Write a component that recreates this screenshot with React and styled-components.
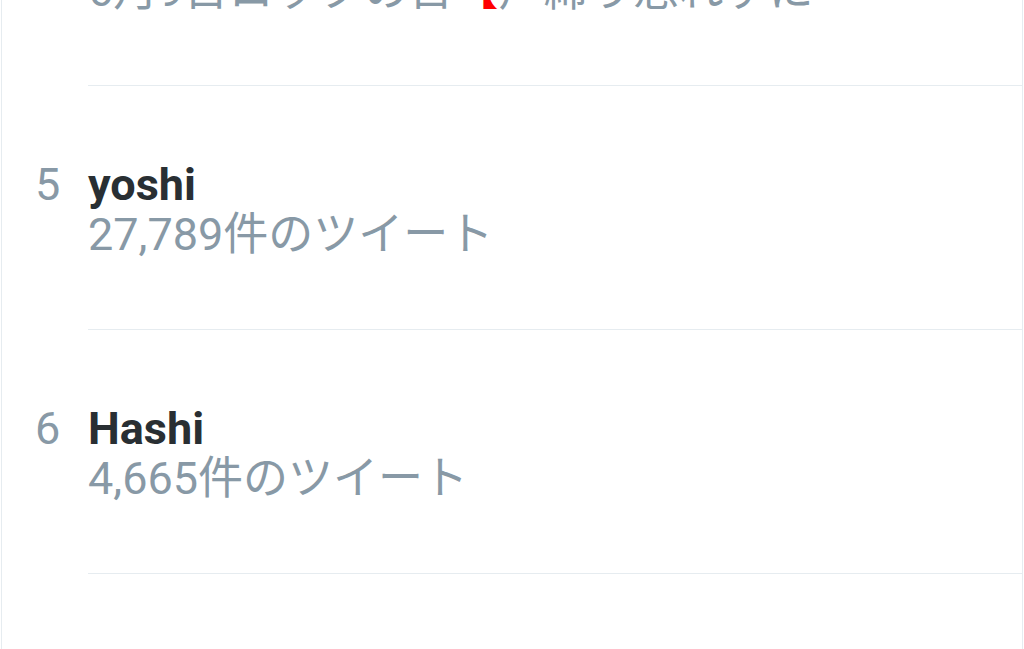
import React from "react";
import styled, { createGlobalStyle } from "styled-components";

const trends = [
  {
    rank: 4,
    name: "#ロックの日",
    detail: ["6月9日ロックの日", "【", "戸締り忘れずに"],
  },
  { rank: 5, name: "yoshi", detail: ["27,789件のツイート"] },
  { rank: 6, name: "Hashi", detail: ["4,665件のツイート"] },
  { rank: 7, name: "ロックの日", detail: ["12,034件のツイート"] },
];

const App = () => {
  return (
    <>
      <GlobalStyle />
      <Viewport>
        <Timeline>
          <List>
            {trends.map((t) => (
              <Row key={t.rank}>
                <Rank>{t.rank}</Rank>
                <Content>
                  <Name>{t.name}</Name>
                  <Detail>
                    {t.detail.map((part, i) =>
                      part === "【" ? <Mark key={i}>{part}</Mark> : part
                    )}
                  </Detail>
                </Content>
              </Row>
            ))}
          </List>
        </Timeline>
      </Viewport>
    </>
  );
};

export default App;

const GlobalStyle = createGlobalStyle`
  html, body {
    margin: 0;
    padding: 0;
    background: #ffffff;
  }
  body {
    font-family: Roboto, "Noto Sans CJK JP", sans-serif;
  }
`;

const Viewport = styled.div`
  height: 649px;
  overflow: hidden;
`;

// scrolled timeline column; flow-root keeps the list's scroll offset inside it
const Timeline = styled.div`
  display: flow-root;
  margin-left: 1px;
  width: 1020px;
  height: 100%;
  border-left: 1px solid #e6ecf0;
  border-right: 1px solid #e6ecf0;
  background: #ffffff;
`;

const List = styled.ul`
  list-style: none;
  margin: -158px 0 0 0;
  padding: 0;
`;

const Row = styled.li`
  display: flex;
`;

const Rank = styled.div`
  width: 86px;
  padding-left: 33px;
  box-sizing: border-box;
  padding-top: 74px;
  font-size: 45px;
  line-height: 50px;
  color: #8899a6;
`;

const Content = styled.div`
  flex: 1;
  padding: 74px 0 69px;
  border-bottom: 1px solid #e6ecf0;
`;

const Name = styled.div`
  font-size: 45px;
  line-height: 50px;
  font-weight: 700;
  color: #292f33;
  white-space: nowrap;
`;

const Detail = styled.div`
  font-size: 45px;
  line-height: 50px;
  color: #8899a6;
  white-space: nowrap;
`;

const Mark = styled.span`
  color: #ff0000;
`;
